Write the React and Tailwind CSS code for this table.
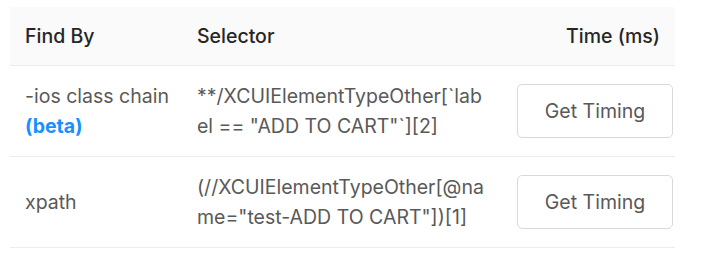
import React from "react";

const rows = [
  {
    findBy: "-ios class chain",
    beta: true,
    sel: ["**/XCUIElementTypeOther[`lab", 'el == "ADD TO CART"`][2]'],
  },
  {
    findBy: "xpath",
    beta: false,
    sel: ["(//XCUIElementTypeOther[@na", 'me="test-ADD TO CART"])[1]'],
  },
];

export default function App() {
  return (
    <div
      className="w-[708px] h-[268px] bg-white pt-[7px] pl-[10px] text-[19.5px] leading-[30px]"
      style={{ fontFamily: "Inter, 'Liberation Sans', sans-serif" }}
    >
      <div className="w-[665px]">
        <div className="flex items-center h-[59px] bg-[#fafafa] border-b border-[#ececec] text-[#262626] font-medium">
          <div className="w-[172px] pl-[15px]">Find By</div>
          <div className="w-[320px] pl-[15px]">Selector</div>
          <div className="flex-1 text-right pr-[15px]">Time (ms)</div>
        </div>
        {rows.map((r, i) => (
          <div
            key={i}
            className="flex items-center h-[91px] border-b border-[#ececec] text-[#595959]"
          >
            <div className="w-[172px] pl-[15px]">
              <div>{r.findBy}</div>
              {r.beta && <div className="text-[#1890ff] font-bold">(beta)</div>}
            </div>
            <div className="w-[320px] pl-[15px]">
              <div className="whitespace-nowrap">{r.sel[0]}</div>
              <div className="whitespace-nowrap">{r.sel[1]}</div>
            </div>
            <div className="flex-1 flex justify-end pr-[2px]">
              <button className="w-[156px] h-[54px] border border-[#d9d9d9] rounded-[5px] bg-white text-[#595959]">
                Get Timing
              </button>
            </div>
          </div>
        ))}
      </div>
    </div>
  );
}
